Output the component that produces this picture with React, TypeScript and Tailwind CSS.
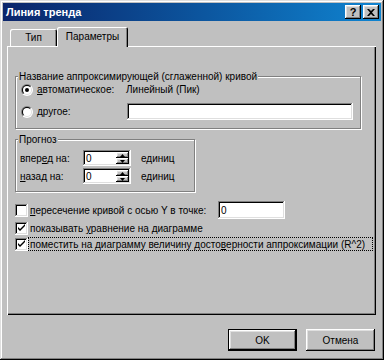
import React from "react";

const raised =
  "bg-[#c0c0c0] shadow-[inset_-1px_-1px_#000,inset_1px_1px_#fff,inset_-2px_-2px_#808080,inset_2px_2px_#dfdfdf]";
const sunken =
  "bg-white shadow-[inset_-1px_-1px_#fff,inset_1px_1px_#808080,inset_-2px_-2px_#dfdfdf,inset_2px_2px_#000]";

function Radio({ checked }: { checked?: boolean }) {
  return (
    <svg width="12" height="12" viewBox="0 0 12 12" className="shrink-0">
      <defs>
        <linearGradient id="rg1" x1="0" y1="0" x2="1" y2="1">
          <stop offset="0.5" stopColor="#808080" />
          <stop offset="0.5" stopColor="#ffffff" />
        </linearGradient>
        <linearGradient id="rg2" x1="0" y1="0" x2="1" y2="1">
          <stop offset="0.5" stopColor="#000000" />
          <stop offset="0.5" stopColor="#dfdfdf" />
        </linearGradient>
      </defs>
      <circle cx="6" cy="6" r="6" fill="url(#rg1)" />
      <circle cx="6" cy="6" r="5" fill="url(#rg2)" />
      <circle cx="6" cy="6" r="4" fill="#fff" />
      {checked && <circle cx="6" cy="6" r="2" fill="#000" />}
    </svg>
  );
}

function Check({ checked }: { checked?: boolean }) {
  return (
    <div className={`w-[13px] h-[13px] shrink-0 relative ${sunken}`}>
      {checked && (
        <svg width="13" height="13" viewBox="0 0 13 13" className="absolute left-0 top-0">
          <path d="M3 5 V7 L5 9 L10 4 V2 L5 7 Z" fill="#000" />
        </svg>
      )}
    </div>
  );
}

function Spin() {
  return (
    <div className={`w-[48px] h-[16px] flex items-center pl-[3px] pr-[2px] ${sunken}`}>
      <span className="flex-1">0</span>
      <div className="flex flex-col w-[13px] h-[12px]">
        <div className={`h-[6px] flex items-center justify-center ${raised}`}>
          <svg width="5" height="3" viewBox="0 0 5 3">
            <path d="M2.5 0 L5 3 L0 3 Z" fill="#000" />
          </svg>
        </div>
        <div className={`h-[6px] flex items-center justify-center ${raised}`}>
          <svg width="5" height="3" viewBox="0 0 5 3">
            <path d="M0 0 L5 0 L2.5 3 Z" fill="#000" />
          </svg>
        </div>
      </div>
    </div>
  );
}

export default function App() {
  return (
    <div className="w-[384px] h-[360px] bg-[#c0c0c0] p-[3px] flex flex-col font-['Liberation_Sans',Arial,sans-serif] text-[10px] leading-[13px] text-black shadow-[inset_-1px_-1px_#000,inset_1px_1px_#dfdfdf,inset_-2px_-2px_#808080,inset_2px_2px_#fff]">
      {/* Title bar */}
      <div className="h-[18px] flex items-center pl-[3px] pr-[2px] bg-linear-to-r from-[#0a246a] to-[#1084d0]">
        <span className="text-white font-bold text-[11px]">Линия тренда</span>
        <div className="ml-auto flex gap-[2px]">
          <div className={`w-[16px] h-[14px] flex items-center justify-center font-bold text-[11px] leading-none ${raised}`}>
            ?
          </div>
          <div className={`w-[16px] h-[14px] flex items-center justify-center ${raised}`}>
            <svg width="8" height="7" viewBox="0 0 8 7">
              <path d="M0 0 H2 L4 2 L6 0 H8 L5 3.5 L8 7 H6 L4 5 L2 7 H0 L3 3.5 Z" fill="#000" />
            </svg>
          </div>
        </div>
      </div>

      {/* Tabs + panel */}
      <div className="ml-[4px] w-[369px]">
        <div className="flex items-end h-[25px] pl-[3px]">
          <div className="w-[47px] h-[17px] flex items-center justify-center rounded-t-[2px] shadow-[inset_1px_1px_#fff,inset_-1px_0_#000,inset_-2px_0_#808080]">
            Тип
          </div>
          <div className="relative z-10 w-[71px] h-[20px] -mb-[1px] pb-[2px] bg-[#c0c0c0] flex items-center justify-center rounded-t-[2px] shadow-[inset_1px_1px_#fff,inset_-1px_0_#000,inset_-2px_0_#808080]">
            Параметры
          </div>
        </div>
        <div className="h-[269px] pt-[24px] pl-[8px] shadow-[inset_1px_1px_#fff,inset_-1px_-1px_#000,inset_-2px_-2px_#808080]">
          {/* Group 1 */}
          <fieldset className="w-[346px] border border-[#808080] shadow-[1px_1px_0_#fff,inset_1px_1px_0_#fff] pl-[5px] pb-[8px]">
            <legend className="-ml-[3px] px-[1px] bg-[#c0c0c0]">
              Название аппроксимирующей (сглаженной) кривой
            </legend>
            <div className="flex items-center h-[13px]">
              <div className="w-[105px] flex items-center gap-[4px]">
                <Radio checked />
                <span>
                  <u>а</u>втоматическое:
                </span>
              </div>
              <span>Линейный (Пик)</span>
            </div>
            <div className="flex items-center mt-[7px]">
              <div className="w-[106px] flex items-center gap-[4px]">
                <Radio />
                <span>
                  <u>д</u>ругое:
                </span>
              </div>
              <div className={`w-[226px] h-[17px] ${sunken}`} />
            </div>
          </fieldset>

          {/* Group 2 */}
          <fieldset className="mt-[4px] w-[180px] border border-[#808080] shadow-[1px_1px_0_#fff,inset_1px_1px_0_#fff] pl-[4px] pt-[4px] pb-[7px]">
            <legend className="-ml-[2px] px-[1px] bg-[#c0c0c0]">Прогноз</legend>
            <div className="flex items-center">
              <span className="w-[63px]">
                впер<u>е</u>д на:
              </span>
              <Spin />
              <span className="ml-[10px]">единиц</span>
            </div>
            <div className="flex items-center mt-[2px]">
              <span className="w-[63px]">
                <u>н</u>азад на:
              </span>
              <Spin />
              <span className="ml-[10px]">единиц</span>
            </div>
          </fieldset>

          {/* Checkboxes */}
          <div className="mt-[9px] flex items-center h-[18px]">
            <Check />
            <span className="ml-[2px] w-[188px] whitespace-nowrap">
              <u>п</u>ересечение кривой с осью Y в точке:
            </span>
            <div className={`w-[67px] h-[18px] flex items-center pl-[3px] ${sunken}`}>0</div>
          </div>
          <div className="mt-[1px] flex items-center h-[16px]">
            <Check checked />
            <span className="ml-[2px] whitespace-nowrap">
              показывать <u>у</u>равнение на диаграмме
            </span>
          </div>
          <div className="flex items-center h-[16px]">
            <Check checked />
            <span className="w-[345px] h-[14px] flex items-center pl-[1px] border border-dotted border-black whitespace-nowrap">
              поместить на диаграмму величину досто<u>в</u>ерности аппроксимации (R^2)
            </span>
          </div>
        </div>
      </div>

      {/* Buttons */}
      <div className="flex justify-end gap-[9px] mt-[14px] pr-[6px]">
        <div className="w-[69px] h-[22px] border border-black">
          <div className={`w-full h-full flex items-center justify-center ${raised}`}>OK</div>
        </div>
        <div className={`w-[69px] h-[22px] flex items-center justify-center ${raised}`}>Отмена</div>
      </div>
    </div>
  );
}
